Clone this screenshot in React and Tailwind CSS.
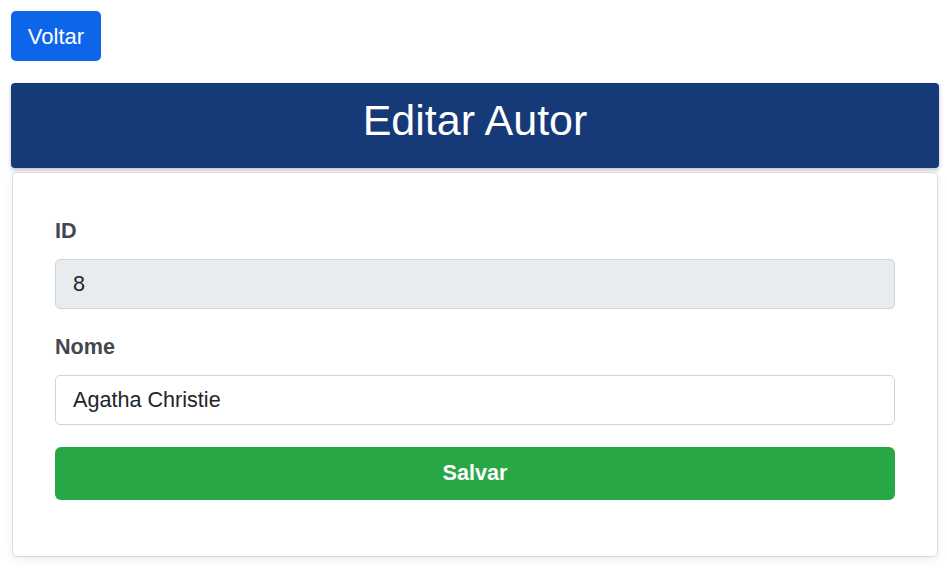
import React, { useState } from "react";

export default function App() {
  const [nome, setNome] = useState("Agatha Christie");

  return (
    <div style={{ fontFamily: "'Liberation Sans', Arial, sans-serif" }} className="min-h-screen bg-white pl-[11px] pr-[8px] pt-[11px] pb-[10px]">
      <button className="h-[50px] w-[90px] rounded-[5px] bg-[#0d66ea] text-[22px] text-white">
        Voltar
      </button>

      <div className="mt-[22px] flex h-[85px] items-center justify-center rounded-[4px] bg-[#163a78] pb-[10px] shadow-[0_2px_4px_rgba(0,0,0,0.25)]">
        <h1 className="text-[43px] leading-none text-white">Editar Autor</h1>
      </div>

      <div className="mx-[1px] mt-[4px] rounded-[5px] border border-[#dcdcdc] bg-white px-[42px] pt-[43px] pb-[56px] shadow-[0_2px_8px_rgba(0,0,0,0.08)]">
        <form onSubmit={(e) => e.preventDefault()}>
          <label className="block text-[21.6px] font-bold leading-[30px] text-[#43484e]">ID</label>
          <input
            value="8"
            disabled
            className="mt-[13px] block h-[50px] w-full rounded-[5px] border border-[#ced4da] bg-[#e9ecef] px-[17px] text-[21.6px] text-[#212529]"
          />

          <label className="mt-[23px] block text-[21.6px] font-bold leading-[30px] text-[#43484e]">Nome</label>
          <input
            value={nome}
            onChange={(e) => setNome(e.target.value)}
            className="mt-[13px] block h-[50px] w-full rounded-[5px] border border-[#ced4da] bg-white px-[17px] text-[21.6px] text-[#212529] focus:outline-none"
          />

          <button
            type="submit"
            className="mt-[22px] block h-[53px] w-full rounded-[6px] bg-[#28a745] text-[21.6px] font-bold text-white"
          >
            Salvar
          </button>
        </form>
      </div>
    </div>
  );
}
